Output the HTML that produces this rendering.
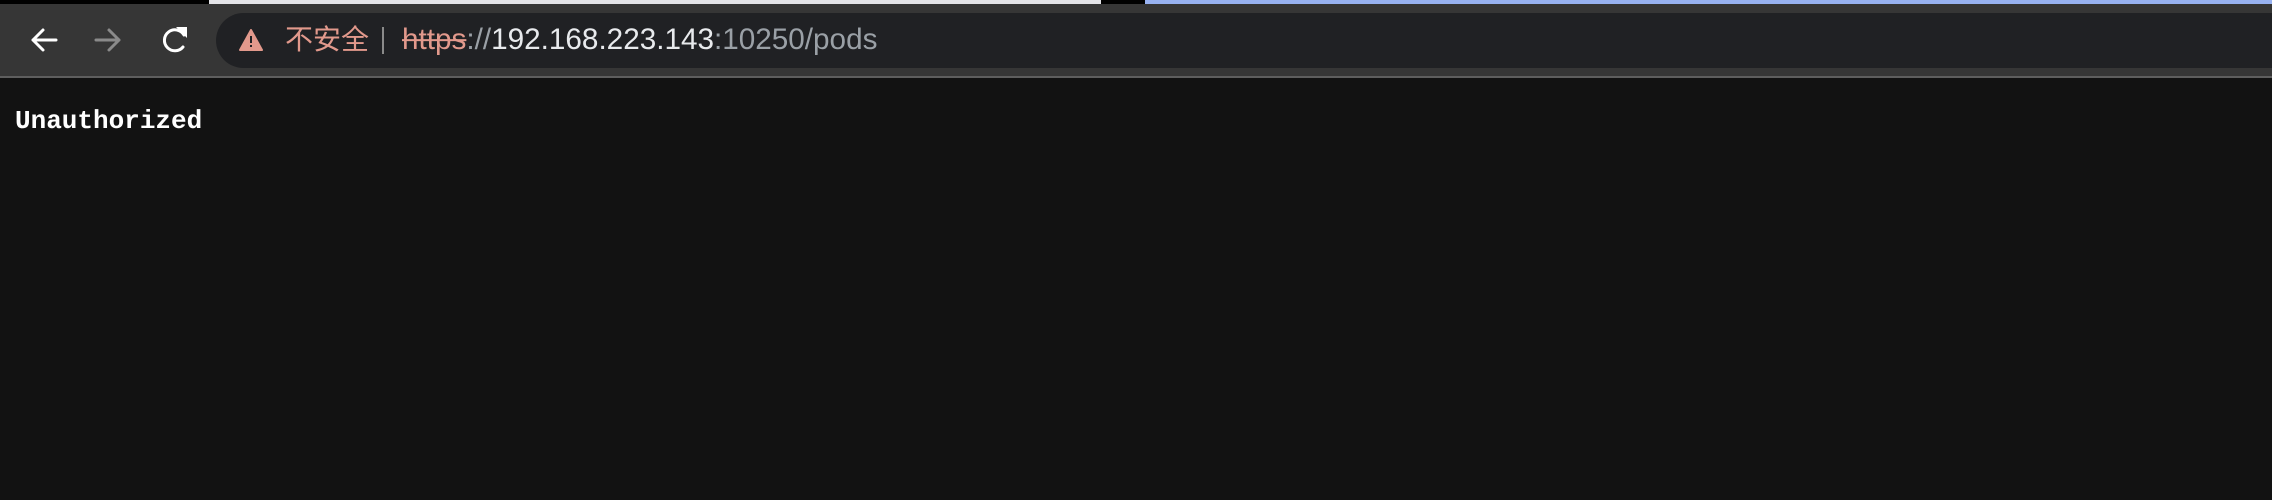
<!DOCTYPE html>
<html><head><meta charset="utf-8"><style>
html,body{margin:0;padding:0;width:2272px;height:500px;background:#121212;overflow:hidden;position:relative}
.strip{position:absolute;top:0;height:4px}
#tb{position:absolute;top:4px;left:0;width:2272px;height:72px;background:#363636}
#line{position:absolute;top:76px;left:0;width:2272px;height:2px;background:#5e5e5e}
#omni{position:absolute;top:13px;left:216px;width:2100px;height:55px;background:#202124;border-radius:28px}
.t{position:absolute;top:40px;transform:translateY(-50%);font-family:"Liberation Sans","Noto Sans CJK SC",sans-serif;font-size:28px;white-space:nowrap;line-height:1}
#u{position:absolute;left:15px;top:108px;font-family:"Liberation Mono",monospace;font-weight:bold;font-size:26px;color:#fff;line-height:1}
</style></head><body>
<div class="strip" style="left:0;width:209px;background:#000"></div>
<div class="strip" style="left:209px;width:892px;background:#e4e4e8"></div>
<div class="strip" style="left:1101px;width:44px;background:#000"></div>
<div class="strip" style="left:1145px;width:1127px;background:#98b2f1"></div>
<div id="tb"></div><div id="line"></div>
<div id="omni"></div>
<svg style="position:absolute;left:0;top:0" width="400" height="80">
<g fill="none" stroke-width="3" stroke-linecap="round" stroke-linejoin="round">
<path d="M56 40H33M43 30L33 40L43 50" stroke="#fff"/>
<path d="M96 40H119M109 30L119 40L109 50" stroke="#8a8a8a"/>
<path d="M184 35A10.5 10.5 0 1 0 183 47" stroke="#fff"/>
</g>
<path d="M176 27L187 27L187 38Z" fill="#fff"/>
<path d="M251 30L262 50H240Z" fill="#e2998c" stroke="#e2998c" stroke-width="2" stroke-linejoin="round"/>
<rect x="250" y="36" width="2" height="7" fill="#202124"/><rect x="250" y="45" width="2" height="2" fill="#202124"/>
<rect x="382" y="27" width="2" height="27" fill="#8a8a8a"/>
</svg>
<div class="t" style="left:285px;color:#e2998c">不安全</div>
<div class="t" style="left:402px;color:#9aa0a6;font-size:29.7px"><span style="color:#e2998c;text-decoration:line-through">https</span>://<span style="color:#e8eaed">192.168.223.143</span>:10250/pods</div>
<div id="u">Unauthorized</div>
</body></html>
